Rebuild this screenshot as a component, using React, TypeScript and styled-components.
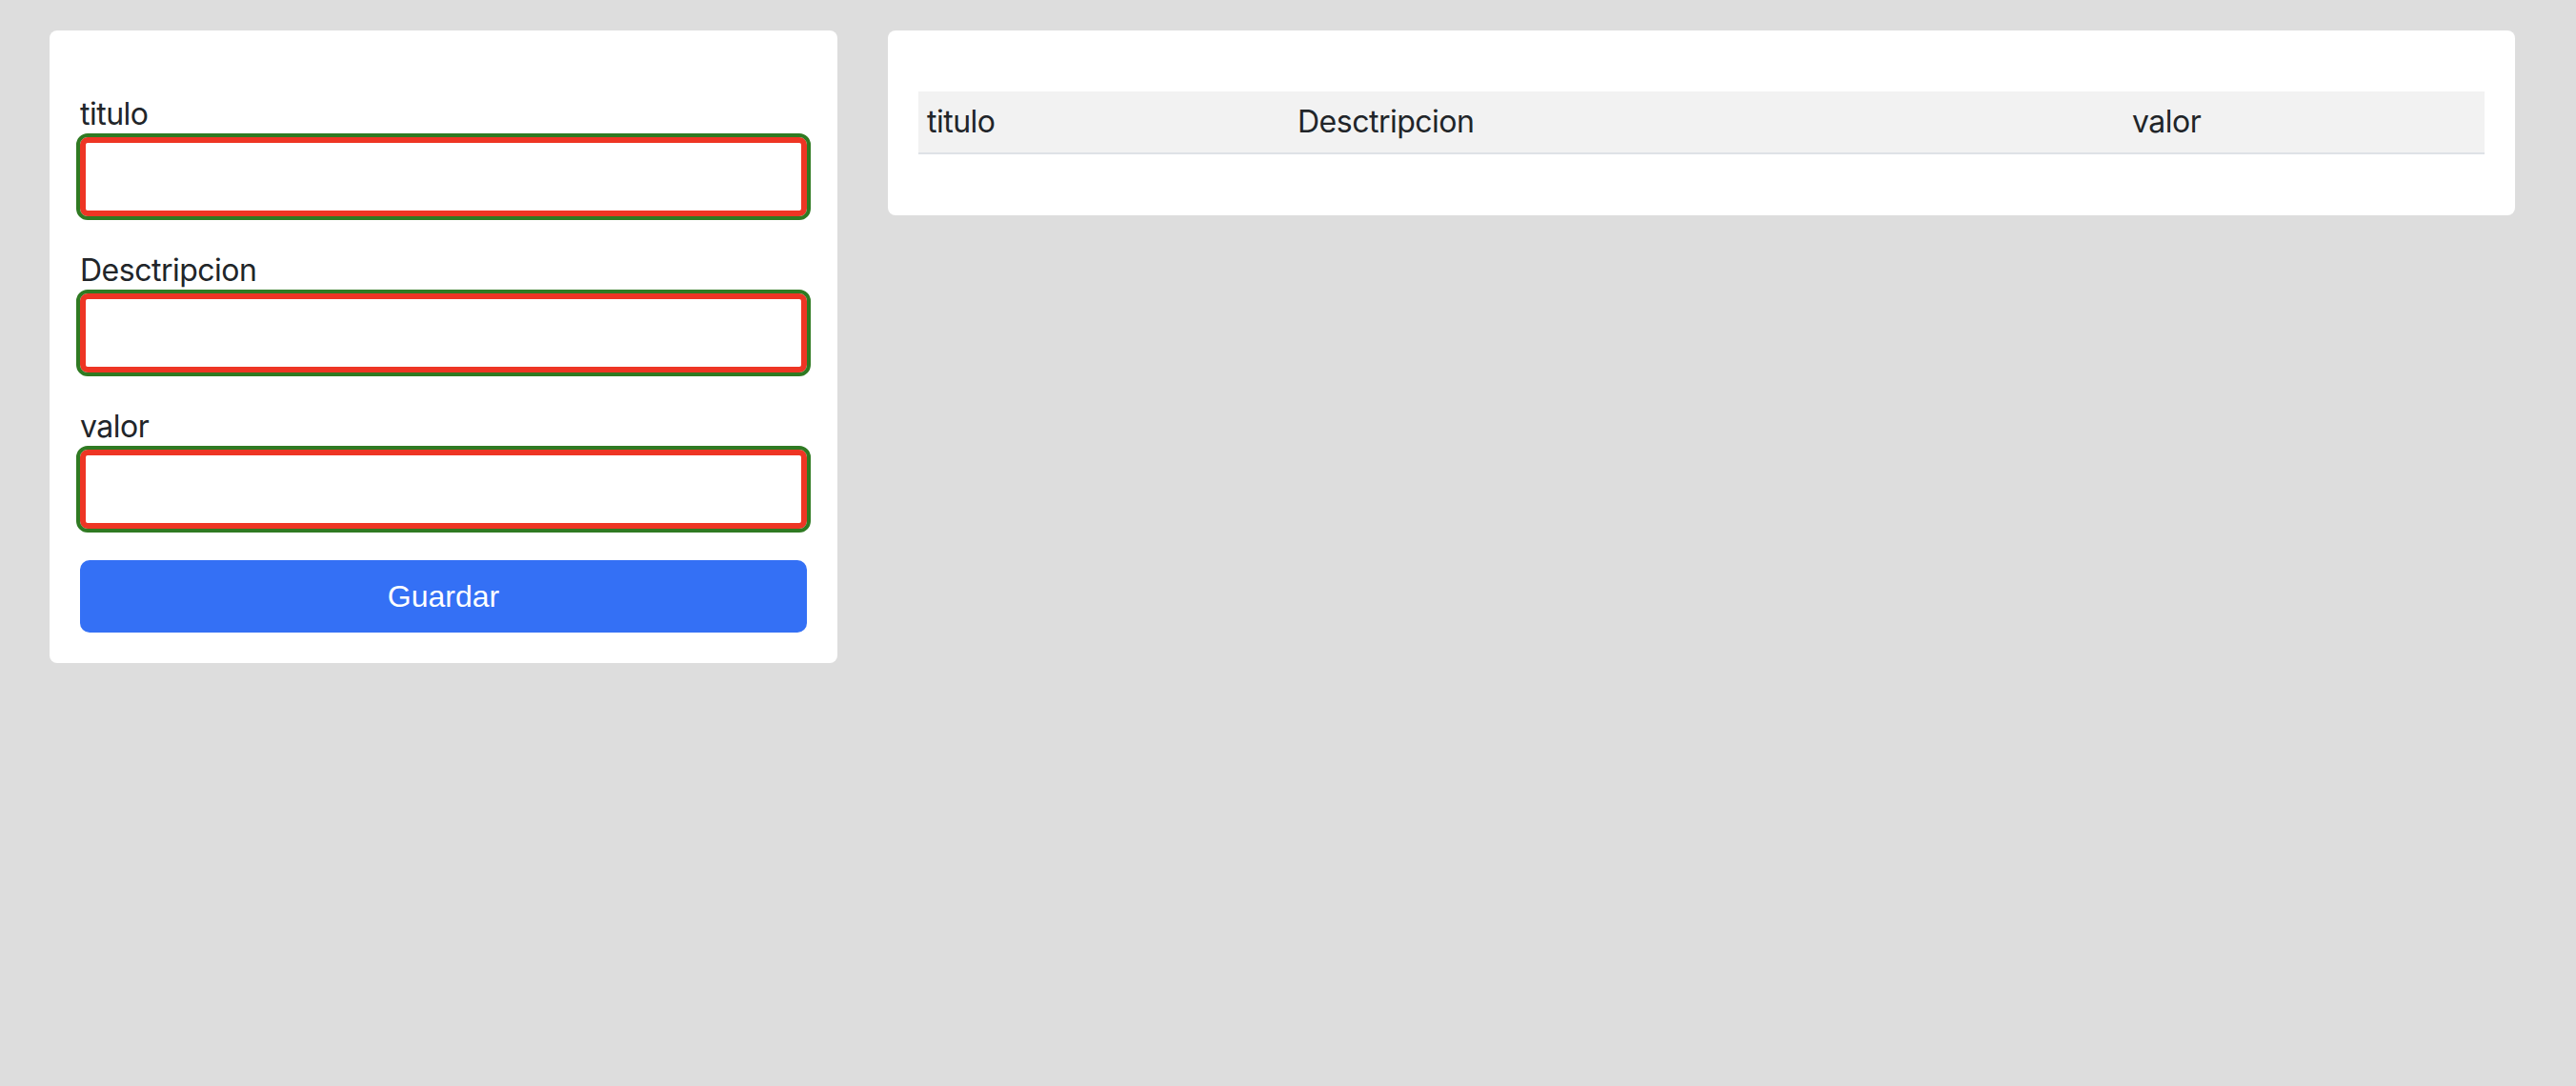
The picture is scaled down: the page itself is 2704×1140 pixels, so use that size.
import React from "react";
import styled, { createGlobalStyle } from "styled-components";

const Global = createGlobalStyle`
  html, body { margin: 0; padding: 0; background: #dddddd; }
  body { font-family: "Liberation Sans", Arial, sans-serif; color: #212529; }
  * { box-sizing: border-box; }
`;

const Page = styled.div`
  display: flex;
  align-items: flex-start;
  gap: 53px;
  padding: 32px 64px 0 52px;
`;

const Card = styled.div<{ $width: number }>`
  width: ${(p) => p.$width}px;
  background: #ffffff;
  border-radius: 8px;
`;

const FormCard = styled(Card)`
  padding: 64px 32px 32px;
`;

const TableCard = styled(Card)`
  padding: 64px 32px 0;
`;

const Field = styled.div`
  display: flex;
  flex-direction: column;
  margin-bottom: 33px;
`;

const Label = styled.label`
  font-family: Inter, "Liberation Sans", sans-serif;
  font-size: 32px;
  line-height: 48px;
  letter-spacing: -0.5px;
  color: #212529;
`;

const Input = styled.input`
  height: 83px;
  width: 100%;
  border: 6px solid #ee3524;
  border-radius: 8px;
  outline: 4px solid #2f7a22;
  background: #fff;
  font-size: 32px;
  padding: 0 18px;
`;

const Button = styled.button`
  width: 100%;
  height: 76px;
  border: none;
  border-radius: 10px;
  background: #3470f5;
  color: #ffffff;
  font-family: "Liberation Sans", Arial, sans-serif;
  font-size: 32px;
  cursor: pointer;
`;

const Table = styled.table`
  width: 100%;
  border-collapse: collapse;
  margin-bottom: 64px;
`;

const HeadRow = styled.tr`
  background: #f2f2f2;
  border-bottom: 2px solid #dee2e6;
`;

const Th = styled.th<{ $width?: number }>`
  text-align: left;
  font-family: Inter, "Liberation Sans", sans-serif;
  font-weight: 400;
  font-size: 32px;
  line-height: 48px;
  letter-spacing: -0.5px;
  padding: 8px 9px;
  color: #212529;
  width: ${(p) => (p.$width ? `${p.$width}px` : "auto")};
`;

const fields = ["titulo", "Desctripcion", "valor"];

export default function App() {
  return (
    <>
      <Global />
      <Page>
        <FormCard $width={827}>
          {fields.map((f) => (
            <Field key={f}>
              <Label>{f}</Label>
              <Input type="text" />
            </Field>
          ))}
          <Button>Guardar</Button>
        </FormCard>
        <TableCard $width={1708}>
          <Table>
            <thead>
              <HeadRow>
                <Th $width={389}>titulo</Th>
                <Th $width={876}>Desctripcion</Th>
                <Th>valor</Th>
              </HeadRow>
            </thead>
            <tbody></tbody>
          </Table>
        </TableCard>
      </Page>
    </>
  );
}
